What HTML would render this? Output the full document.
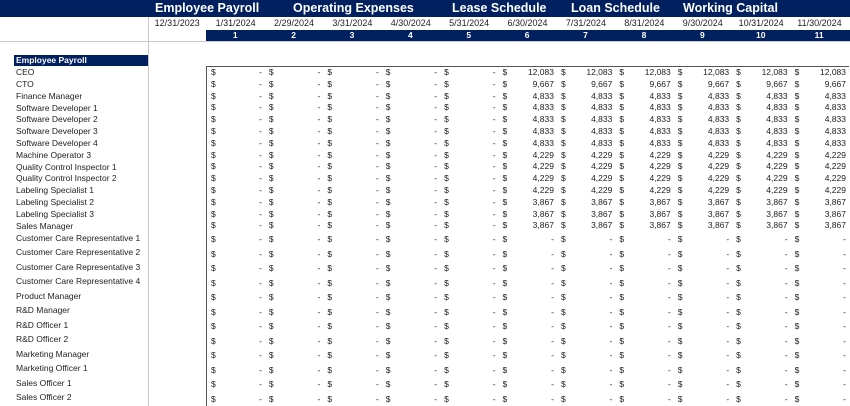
<!DOCTYPE html>
<html><head><meta charset="utf-8"><style>
*{margin:0;padding:0;box-sizing:border-box}
body{width:850px;height:406px;overflow:hidden;background:#fff;font-family:"Liberation Sans",sans-serif;color:#222;position:relative}
.ban{position:absolute;left:0;top:0;width:850px;height:17px;background:#002060}
.h{position:absolute;top:0;height:17px;line-height:17px;color:#fff;font-weight:bold;font-size:12.5px;white-space:nowrap}
.vl{position:absolute;left:148px;top:17px;width:1px;height:389px;background:#c8c8c8}
.hl{position:absolute;left:0;top:41px;width:850px;height:1px;background:#c8c8c8}
.dates{position:absolute;top:18px;left:148px;font-size:9px;display:flex}
.dates div{text-align:center;width:58.4px;height:11px;line-height:11px}
.nb{position:absolute;left:206px;top:30px;width:644px;height:11px;background:#002060;display:flex;color:#fff;font-size:8.5px;font-weight:bold}
.nb div{width:58.4px;text-align:center;line-height:11px}
.ep{position:absolute;left:14px;top:55px;width:134px;height:11px;background:#002060;color:#fff;font-size:8.5px;font-weight:bold;line-height:11px;padding-left:2px}
.lab{position:absolute;left:16px;font-size:8.5px;white-space:nowrap}
table{position:absolute;left:206px;top:66px;border-collapse:collapse;border-left:1px solid #555;border-top:1px solid #555;font-size:8.5px;table-layout:fixed;width:643px}
td{width:58.4px;padding:0 3px 0 4px;text-align:right;white-space:nowrap}
td i{float:left;font-style:normal}
tr.a td{height:11.8px;line-height:11.8px}
tr.b td{height:14.5px;line-height:14.5px}
</style></head><body>
<div class="ban"></div>
<div class="h" style="left:155px">Employee Payroll</div>
<div class="h" style="left:293px">Operating Expenses</div>
<div class="h" style="left:452px">Lease Schedule</div>
<div class="h" style="left:571px">Loan Schedule</div>
<div class="h" style="left:683px">Working Capital</div>
<div class="vl"></div><div class="hl"></div>
<div class="dates"><div>12/31/2023</div><div>1/31/2024</div><div>2/29/2024</div><div>3/31/2024</div><div>4/30/2024</div><div>5/31/2024</div><div>6/30/2024</div><div>7/31/2024</div><div>8/31/2024</div><div>9/30/2024</div><div>10/31/2024</div><div>11/30/2024</div></div>
<div class="nb"><div>1</div><div>2</div><div>3</div><div>4</div><div>5</div><div>6</div><div>7</div><div>8</div><div>9</div><div>10</div><div>11</div></div>
<div class="ep">Employee Payroll</div>
<div class="lab" style="top:67px">CEO</div>
<div class="lab" style="top:79px">CTO</div>
<div class="lab" style="top:91px">Finance Manager</div>
<div class="lab" style="top:103px">Software Developer 1</div>
<div class="lab" style="top:114px">Software Developer 2</div>
<div class="lab" style="top:126px">Software Developer 3</div>
<div class="lab" style="top:138px">Software Developer 4</div>
<div class="lab" style="top:150px">Machine Operator 3</div>
<div class="lab" style="top:162px">Quality Control Inspector 1</div>
<div class="lab" style="top:173px">Quality Control Inspector 2</div>
<div class="lab" style="top:185px">Labeling Specialist 1</div>
<div class="lab" style="top:197px">Labeling Specialist 2</div>
<div class="lab" style="top:209px">Labeling Specialist 3</div>
<div class="lab" style="top:221px">Sales Manager</div>
<div class="lab" style="top:233px">Customer Care Representative 1</div>
<div class="lab" style="top:247px">Customer Care Representative 2</div>
<div class="lab" style="top:262px">Customer Care Representative 3</div>
<div class="lab" style="top:276px">Customer Care Representative 4</div>
<div class="lab" style="top:291px">Product Manager</div>
<div class="lab" style="top:305px">R&amp;D Manager</div>
<div class="lab" style="top:320px">R&amp;D Officer 1</div>
<div class="lab" style="top:334px">R&amp;D Officer 2</div>
<div class="lab" style="top:349px">Marketing Manager</div>
<div class="lab" style="top:363px">Marketing Officer 1</div>
<div class="lab" style="top:378px">Sales Officer 1</div>
<div class="lab" style="top:392px">Sales Officer 2</div>
<table>
<tr class="a"><td><i>$</i>-</td><td><i>$</i>-</td><td><i>$</i>-</td><td><i>$</i>-</td><td><i>$</i>-</td><td><i>$</i>12,083</td><td><i>$</i>12,083</td><td><i>$</i>12,083</td><td><i>$</i>12,083</td><td><i>$</i>12,083</td><td><i>$</i>12,083</td></tr>
<tr class="a"><td><i>$</i>-</td><td><i>$</i>-</td><td><i>$</i>-</td><td><i>$</i>-</td><td><i>$</i>-</td><td><i>$</i>9,667</td><td><i>$</i>9,667</td><td><i>$</i>9,667</td><td><i>$</i>9,667</td><td><i>$</i>9,667</td><td><i>$</i>9,667</td></tr>
<tr class="a"><td><i>$</i>-</td><td><i>$</i>-</td><td><i>$</i>-</td><td><i>$</i>-</td><td><i>$</i>-</td><td><i>$</i>4,833</td><td><i>$</i>4,833</td><td><i>$</i>4,833</td><td><i>$</i>4,833</td><td><i>$</i>4,833</td><td><i>$</i>4,833</td></tr>
<tr class="a"><td><i>$</i>-</td><td><i>$</i>-</td><td><i>$</i>-</td><td><i>$</i>-</td><td><i>$</i>-</td><td><i>$</i>4,833</td><td><i>$</i>4,833</td><td><i>$</i>4,833</td><td><i>$</i>4,833</td><td><i>$</i>4,833</td><td><i>$</i>4,833</td></tr>
<tr class="a"><td><i>$</i>-</td><td><i>$</i>-</td><td><i>$</i>-</td><td><i>$</i>-</td><td><i>$</i>-</td><td><i>$</i>4,833</td><td><i>$</i>4,833</td><td><i>$</i>4,833</td><td><i>$</i>4,833</td><td><i>$</i>4,833</td><td><i>$</i>4,833</td></tr>
<tr class="a"><td><i>$</i>-</td><td><i>$</i>-</td><td><i>$</i>-</td><td><i>$</i>-</td><td><i>$</i>-</td><td><i>$</i>4,833</td><td><i>$</i>4,833</td><td><i>$</i>4,833</td><td><i>$</i>4,833</td><td><i>$</i>4,833</td><td><i>$</i>4,833</td></tr>
<tr class="a"><td><i>$</i>-</td><td><i>$</i>-</td><td><i>$</i>-</td><td><i>$</i>-</td><td><i>$</i>-</td><td><i>$</i>4,833</td><td><i>$</i>4,833</td><td><i>$</i>4,833</td><td><i>$</i>4,833</td><td><i>$</i>4,833</td><td><i>$</i>4,833</td></tr>
<tr class="a"><td><i>$</i>-</td><td><i>$</i>-</td><td><i>$</i>-</td><td><i>$</i>-</td><td><i>$</i>-</td><td><i>$</i>4,229</td><td><i>$</i>4,229</td><td><i>$</i>4,229</td><td><i>$</i>4,229</td><td><i>$</i>4,229</td><td><i>$</i>4,229</td></tr>
<tr class="a"><td><i>$</i>-</td><td><i>$</i>-</td><td><i>$</i>-</td><td><i>$</i>-</td><td><i>$</i>-</td><td><i>$</i>4,229</td><td><i>$</i>4,229</td><td><i>$</i>4,229</td><td><i>$</i>4,229</td><td><i>$</i>4,229</td><td><i>$</i>4,229</td></tr>
<tr class="a"><td><i>$</i>-</td><td><i>$</i>-</td><td><i>$</i>-</td><td><i>$</i>-</td><td><i>$</i>-</td><td><i>$</i>4,229</td><td><i>$</i>4,229</td><td><i>$</i>4,229</td><td><i>$</i>4,229</td><td><i>$</i>4,229</td><td><i>$</i>4,229</td></tr>
<tr class="a"><td><i>$</i>-</td><td><i>$</i>-</td><td><i>$</i>-</td><td><i>$</i>-</td><td><i>$</i>-</td><td><i>$</i>4,229</td><td><i>$</i>4,229</td><td><i>$</i>4,229</td><td><i>$</i>4,229</td><td><i>$</i>4,229</td><td><i>$</i>4,229</td></tr>
<tr class="a"><td><i>$</i>-</td><td><i>$</i>-</td><td><i>$</i>-</td><td><i>$</i>-</td><td><i>$</i>-</td><td><i>$</i>3,867</td><td><i>$</i>3,867</td><td><i>$</i>3,867</td><td><i>$</i>3,867</td><td><i>$</i>3,867</td><td><i>$</i>3,867</td></tr>
<tr class="a"><td><i>$</i>-</td><td><i>$</i>-</td><td><i>$</i>-</td><td><i>$</i>-</td><td><i>$</i>-</td><td><i>$</i>3,867</td><td><i>$</i>3,867</td><td><i>$</i>3,867</td><td><i>$</i>3,867</td><td><i>$</i>3,867</td><td><i>$</i>3,867</td></tr>
<tr class="a"><td><i>$</i>-</td><td><i>$</i>-</td><td><i>$</i>-</td><td><i>$</i>-</td><td><i>$</i>-</td><td><i>$</i>3,867</td><td><i>$</i>3,867</td><td><i>$</i>3,867</td><td><i>$</i>3,867</td><td><i>$</i>3,867</td><td><i>$</i>3,867</td></tr>
<tr class="b"><td><i>$</i>-</td><td><i>$</i>-</td><td><i>$</i>-</td><td><i>$</i>-</td><td><i>$</i>-</td><td><i>$</i>-</td><td><i>$</i>-</td><td><i>$</i>-</td><td><i>$</i>-</td><td><i>$</i>-</td><td><i>$</i>-</td></tr>
<tr class="b"><td><i>$</i>-</td><td><i>$</i>-</td><td><i>$</i>-</td><td><i>$</i>-</td><td><i>$</i>-</td><td><i>$</i>-</td><td><i>$</i>-</td><td><i>$</i>-</td><td><i>$</i>-</td><td><i>$</i>-</td><td><i>$</i>-</td></tr>
<tr class="b"><td><i>$</i>-</td><td><i>$</i>-</td><td><i>$</i>-</td><td><i>$</i>-</td><td><i>$</i>-</td><td><i>$</i>-</td><td><i>$</i>-</td><td><i>$</i>-</td><td><i>$</i>-</td><td><i>$</i>-</td><td><i>$</i>-</td></tr>
<tr class="b"><td><i>$</i>-</td><td><i>$</i>-</td><td><i>$</i>-</td><td><i>$</i>-</td><td><i>$</i>-</td><td><i>$</i>-</td><td><i>$</i>-</td><td><i>$</i>-</td><td><i>$</i>-</td><td><i>$</i>-</td><td><i>$</i>-</td></tr>
<tr class="b"><td><i>$</i>-</td><td><i>$</i>-</td><td><i>$</i>-</td><td><i>$</i>-</td><td><i>$</i>-</td><td><i>$</i>-</td><td><i>$</i>-</td><td><i>$</i>-</td><td><i>$</i>-</td><td><i>$</i>-</td><td><i>$</i>-</td></tr>
<tr class="b"><td><i>$</i>-</td><td><i>$</i>-</td><td><i>$</i>-</td><td><i>$</i>-</td><td><i>$</i>-</td><td><i>$</i>-</td><td><i>$</i>-</td><td><i>$</i>-</td><td><i>$</i>-</td><td><i>$</i>-</td><td><i>$</i>-</td></tr>
<tr class="b"><td><i>$</i>-</td><td><i>$</i>-</td><td><i>$</i>-</td><td><i>$</i>-</td><td><i>$</i>-</td><td><i>$</i>-</td><td><i>$</i>-</td><td><i>$</i>-</td><td><i>$</i>-</td><td><i>$</i>-</td><td><i>$</i>-</td></tr>
<tr class="b"><td><i>$</i>-</td><td><i>$</i>-</td><td><i>$</i>-</td><td><i>$</i>-</td><td><i>$</i>-</td><td><i>$</i>-</td><td><i>$</i>-</td><td><i>$</i>-</td><td><i>$</i>-</td><td><i>$</i>-</td><td><i>$</i>-</td></tr>
<tr class="b"><td><i>$</i>-</td><td><i>$</i>-</td><td><i>$</i>-</td><td><i>$</i>-</td><td><i>$</i>-</td><td><i>$</i>-</td><td><i>$</i>-</td><td><i>$</i>-</td><td><i>$</i>-</td><td><i>$</i>-</td><td><i>$</i>-</td></tr>
<tr class="b"><td><i>$</i>-</td><td><i>$</i>-</td><td><i>$</i>-</td><td><i>$</i>-</td><td><i>$</i>-</td><td><i>$</i>-</td><td><i>$</i>-</td><td><i>$</i>-</td><td><i>$</i>-</td><td><i>$</i>-</td><td><i>$</i>-</td></tr>
<tr class="b"><td><i>$</i>-</td><td><i>$</i>-</td><td><i>$</i>-</td><td><i>$</i>-</td><td><i>$</i>-</td><td><i>$</i>-</td><td><i>$</i>-</td><td><i>$</i>-</td><td><i>$</i>-</td><td><i>$</i>-</td><td><i>$</i>-</td></tr>
<tr class="b"><td><i>$</i>-</td><td><i>$</i>-</td><td><i>$</i>-</td><td><i>$</i>-</td><td><i>$</i>-</td><td><i>$</i>-</td><td><i>$</i>-</td><td><i>$</i>-</td><td><i>$</i>-</td><td><i>$</i>-</td><td><i>$</i>-</td></tr>
</table>
</body></html>
